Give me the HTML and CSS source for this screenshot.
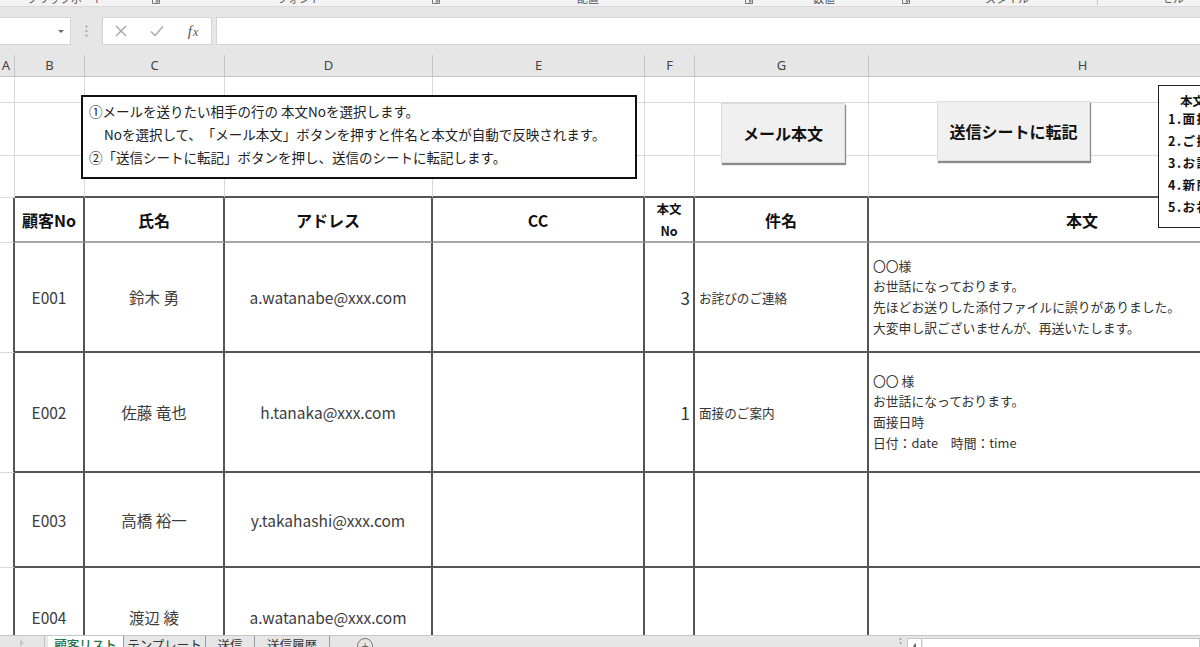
FILE: index.html
```html
<!DOCTYPE html>
<html lang="ja">
<head>
<meta charset="utf-8">
<title>顧客リスト</title>
<link rel="stylesheet" href="styles.css">
</head>
<body>
<div class="app">
  <div class="ribbon-tail">
    <span class="rl w-clip">クリップボード</span>
    <span class="rl w-l1"><svg class="launch" width="8" height="8" viewBox="0 0 8 8"><path d="M0.5 0.5h7v7h-7z M2 2l4 4 M6 3.5v2.5h-2.5" fill="none" stroke="#777" stroke-width="1"/></svg></span>
    <span class="rl w-font">フォント</span>
    <span class="rl w-l2"><svg class="launch" width="8" height="8" viewBox="0 0 8 8"><path d="M0.5 0.5h7v7h-7z M2 2l4 4 M6 3.5v2.5h-2.5" fill="none" stroke="#777" stroke-width="1"/></svg></span>
    <span class="rl w-align">配置</span>
    <span class="rl w-l3"><svg class="launch" width="8" height="8" viewBox="0 0 8 8"><path d="M0.5 0.5h7v7h-7z M2 2l4 4 M6 3.5v2.5h-2.5" fill="none" stroke="#777" stroke-width="1"/></svg></span>
    <span class="rl w-num">数値</span>
    <span class="rl w-l4"><svg class="launch" width="8" height="8" viewBox="0 0 8 8"><path d="M0.5 0.5h7v7h-7z M2 2l4 4 M6 3.5v2.5h-2.5" fill="none" stroke="#777" stroke-width="1"/></svg></span>
    <span class="rl w-style">スタイル</span>
    <span class="rl w-div"><span class="vdiv"></span></span>
    <span class="rl w-cell">セル</span>
  </div>

  <div class="fbar">
    <div class="namebox"><span class="caret"></span></div>
    <div class="fsep"><svg width="3" height="12" viewBox="0 0 3 12"><circle cx="1.5" cy="1.5" r="1" fill="#9a9a9a"/><circle cx="1.5" cy="6" r="1" fill="#9a9a9a"/><circle cx="1.5" cy="10.5" r="1" fill="#9a9a9a"/></svg></div>
    <div class="fbtns">
      <span class="fb"><svg width="12" height="12" viewBox="0 0 12 12"><path d="M1 1L11 11M11 1L1 11" stroke="#a3a3a3" stroke-width="1.3" fill="none"/></svg></span>
      <span class="fb"><svg width="14" height="12" viewBox="0 0 14 12"><path d="M1 6.5L5 10.5L13 1.5" stroke="#a8a8a8" stroke-width="1.4" fill="none"/></svg></span>
      <span class="fb fx"><i>f</i><i class="fxx">x</i></span>
    </div>
    <div class="finput"></div>
  </div>

  <div class="colhead">
    <div class="ch ch-a">A</div>
    <div class="ch">B</div>
    <div class="ch">C</div>
    <div class="ch">D</div>
    <div class="ch">E</div>
    <div class="ch">F</div>
    <div class="ch">G</div>
    <div class="ch">H</div>
  </div>

  <div class="sheet">
    <div class="grid">
      <!-- row 1 -->
      <div class="c"></div><div class="c"></div><div class="c"></div><div class="c"></div><div class="c"></div><div class="c"></div><div class="c"></div><div class="c"></div>
      <!-- row 2 -->
      <div class="c"></div><div class="c"></div><div class="c"></div><div class="c"></div><div class="c"></div><div class="c"></div><div class="c"></div><div class="c"></div>
      <!-- row 3 -->
      <div class="c"></div><div class="c top"></div><div class="c top"></div><div class="c top"></div><div class="c top"></div><div class="c top"></div><div class="c top"></div><div class="c top"></div>
      <!-- header row -->
      <div class="c lt"></div>
      <div class="c t th">顧客No</div>
      <div class="c t th">氏名</div>
      <div class="c t th">アドレス</div>
      <div class="c t th">CC</div>
      <div class="c t th th-small">本文<br>No</div>
      <div class="c t th">件名</div>
      <div class="c t th">本文</div>
      <!-- E001 -->
      <div class="c lt"></div>
      <div class="c t ctr">E001</div>
      <div class="c t ctr">鈴木 勇</div>
      <div class="c t ctr">a.watanabe@xxx.com</div>
      <div class="c t"></div>
      <div class="c t num">3</div>
      <div class="c t subj">お詫びのご連絡</div>
      <div class="c t body"><span>〇〇様</span><span>お世話になっております。</span><span>先ほどお送りした添付ファイルに誤りがありました。</span><span>大変申し訳ございませんが、再送いたします。</span></div>
      <!-- E002 -->
      <div class="c lt"></div>
      <div class="c t ctr">E002</div>
      <div class="c t ctr">佐藤 竜也</div>
      <div class="c t ctr">h.tanaka@xxx.com</div>
      <div class="c t"></div>
      <div class="c t num">1</div>
      <div class="c t subj">面接のご案内</div>
      <div class="c t body"><span>〇〇 様</span><span>お世話になっております。</span><span>面接日時</span><span>日付：date　時間：time</span></div>
      <!-- E003 -->
      <div class="c lt"></div>
      <div class="c t ctr">E003</div>
      <div class="c t ctr">高橋 裕一</div>
      <div class="c t ctr">y.takahashi@xxx.com</div>
      <div class="c t"></div>
      <div class="c t"></div>
      <div class="c t"></div>
      <div class="c t"></div>
      <!-- E004 -->
      <div class="c lt"></div>
      <div class="c t ctr">E004</div>
      <div class="c t ctr">渡辺 綾</div>
      <div class="c t ctr">a.watanabe@xxx.com</div>
      <div class="c t"></div>
      <div class="c t"></div>
      <div class="c t"></div>
      <div class="c t"></div>
    </div>

    <div class="textbox">
      <p>①メールを送りたい相手の行の 本文Noを選択します。</p>
      <p class="indent">Noを選択して、「メール本文」ボタンを押すと件名と本文が自動で反映されます。</p>
      <p>②「送信シートに転記」ボタンを押し、送信のシートに転記します。</p>
    </div>

    <div class="btn btn-mail">メール本文</div>
    <div class="btn btn-send">送信シートに転記</div>

    <div class="listbox">
      <p class="lb-title">本文No</p>
      <p>1.面接のご案内</p>
      <p>2.ご提案</p>
      <p>3.お詫びのご連絡</p>
      <p>4.新商品のご案内</p>
      <p>5.お礼</p>
    </div>
  </div>

  <div class="tabbar">
    <div class="tabnav"><span class="navarrow"></span></div>
    <div class="tab active">顧客リスト</div>
    <div class="tab t2">テンプレート</div>
    <div class="tab t3">送信</div>
    <div class="tab t4">送信履歴</div>
    <div class="addtab"><span class="plus">+</span></div>
    <div class="tabspace"></div>
    <div class="tabdots"><svg width="3" height="10" viewBox="0 0 3 10"><circle cx="1.5" cy="2" r="1" fill="#999"/><circle cx="1.5" cy="6" r="1" fill="#999"/></svg></div>
    <div class="hscroll">
      <div class="hs-left"><span class="hs-tri"></span></div>
      <div class="hs-track"></div>
    </div>
  </div>
</div>
</body>
</html>
```

FILE: styles.css
```css
* { box-sizing: border-box; margin: 0; padding: 0; }
html, body { width: 1200px; height: 647px; overflow: hidden; background: #fff; }
body { font-family: "Noto Sans CJK JP", "Noto Sans", sans-serif; color: #222; text-spacing-trim: space-all; }

.app { display: flex; flex-direction: column; width: 1200px; height: 647px; overflow: hidden; }

/* ribbon tail */
.ribbon-tail { flex: none; height: 7px; background: #f3f3f3; border-bottom: 1px solid #d9d9d9; display: flex; padding-left: 27px; overflow: hidden; }
.rl { flex: none; font-size: 11px; line-height: 11px; margin-top: -7px; color: #555; white-space: nowrap; }
.launch { display: block; margin-top: 3px; }
.w-clip { width: 125px; }
.w-l1 { width: 125px; }
.w-font { width: 155px; }
.w-l2 { width: 145px; }
.w-align { width: 168px; }
.w-l3 { width: 68px; }
.w-num { width: 89px; }
.w-l4 { width: 83px; }
.w-style { width: 112px; }
.w-div { width: 65px; }
.vdiv { display: block; width: 1px; height: 12px; background: #c8c8c8; }

/* formula bar */
.fbar { flex: none; height: 45px; background: #e6e6e6; display: flex; align-items: flex-start; padding-top: 10px; }
.namebox { width: 71px; height: 28px; background: #fff; border: 1px solid #d4d4d4; border-left: 0; display: flex; align-items: center; justify-content: flex-end; padding-right: 6px; }
.caret { width: 0; height: 0; border-left: 3px solid transparent; border-right: 3px solid transparent; border-top: 3px solid #666; }
.fsep { width: 31px; height: 28px; display: flex; align-items: center; justify-content: center; }
.fbtns { width: 110px; height: 28px; background: #fff; border: 1px solid #d4d4d4; display: grid; grid-template-columns: 36px 36px 36px; align-items: center; }
.fb { display: flex; justify-content: center; align-items: center; }
.fx { font-family: "Liberation Serif", "DejaVu Serif", serif; color: #555; font-size: 15px; line-height: 1; }
.fx i { font-style: italic; }
.fxx { font-size: 12px; margin-left: 1px; position: relative; top: 1px; }
.finput { flex: 1; height: 28px; margin-left: 4px; background: #fff; border: 1px solid #d4d4d4; border-right: 0; }

/* column header */
.colhead { flex: none; height: 25px; background: #e6e6e6; border-bottom: 1px solid #c6c6c6; display: grid; grid-template-columns: 15px 70px 140px 208px 212px 50px 174px 428px; padding-top: 3px; }
.ch { border-right: 1px solid #c4c4c4; font-family: "Noto Sans", "DejaVu Sans", sans-serif; font-size: 13px; color: #444; text-align: center; line-height: 21px; }
.ch-a { text-align: right; padding-right: 4px; overflow: hidden; }

/* sheet */
.sheet { flex: 1; position: relative; overflow: hidden; }
.grid { display: grid; width: 1297px; grid-template-columns: 15px 70px 140px 208px 212px 50px 174px 428px; grid-template-rows: 26px 53px 42px 45px 110px 120px 95px 100px; }
.c { border-right: 1px solid #dadada; border-bottom: 1px solid #dadada; overflow: hidden; }
.c.top { border-bottom: 2px solid #555; }
.c.lt { border-right: 2px solid #555; }
.c.t { border-right: 2px solid #555; border-bottom: 2px solid #555; }
.c.th { border-bottom: 2px solid #a8a8a8; display: flex; align-items: center; justify-content: center; text-align: center; font-weight: bold; font-size: 16px; color: #111; }
.c.th-small { font-size: 12.5px; line-height: 22px; }
.ctr { display: flex; align-items: center; justify-content: center; font-size: 15.5px; color: #3c3c3c; white-space: nowrap; }
.num { display: flex; align-items: center; justify-content: flex-end; padding-right: 3px; font-size: 17px; color: #333; }
.subj { display: flex; align-items: center; padding-left: 4px; font-size: 12.6px; color: #333; white-space: nowrap; }
.body { display: flex; flex-direction: column; justify-content: center; padding-left: 4px; font-size: 12.8px; line-height: 20.7px; color: #333; white-space: nowrap; }

/* overlays on the sheet */
.textbox { position: absolute; left: 81px; top: 18px; width: 556px; height: 84px; background: #fff; border: 2px solid #111; padding: 3px 6px; font-size: 13.5px; line-height: 23px; color: #222; white-space: nowrap; }
.textbox .indent { padding-left: 15px; }

.btn { position: absolute; height: 60px; display: flex; align-items: center; justify-content: center; background: #f0f0f0; border: 1px solid #dcdcdc; box-shadow: 1px 2px 1px #8c8c8c; font-size: 16px; font-weight: bold; color: #111; }
.btn-mail { left: 721px; top: 26px; width: 124px; }
.btn-send { left: 937px; top: 24px; width: 153px; }

.listbox { position: absolute; left: 1158px; top: 8px; width: 90px; height: 143px; background: #fff; border: 1px solid #222; padding: 5px 0 0 9px; font-size: 12.5px; font-weight: bold; line-height: 22px; color: #111; white-space: nowrap; letter-spacing: 1.5px; }
.listbox .lb-title { padding-left: 12px; line-height: 20px; margin-bottom: -3px; letter-spacing: 0; }

/* sheet tabs */
.tabbar { flex: none; height: 12px; background: #e6e6e6; border-top: 1px solid #c6c6c6; display: flex; align-items: flex-start; overflow: hidden; }
.tabnav { width: 45px; height: 11px; border-right: 1px solid #c0c0c0; display: flex; justify-content: center; padding-top: 3px; }
.navarrow { width: 0; height: 0; border-top: 4px solid transparent; border-bottom: 4px solid transparent; border-left: 4px solid #c8c8c8; }
.tab { height: 11px; font-size: 12.5px; line-height: 16px; padding-top: 1px; color: #333; white-space: nowrap; text-align: center; overflow: hidden; }
.tab.active { margin-left: 3px; width: 75px; background: #fff; color: #217346; font-weight: 500; }
.t2 { width: 83px; border-left: 1px solid #9a9a9a; border-right: 1px solid #9a9a9a; }
.t3 { width: 49px; border-right: 1px solid #9a9a9a; }
.t4 { width: 75px; border-right: 1px solid #9a9a9a; }
.addtab { width: 70px; display: flex; justify-content: center; padding-top: 2px; }
.plus { display: block; width: 16px; height: 16px; border: 1px solid #777; border-radius: 50%; font-size: 13px; line-height: 13px; text-align: center; color: #666; }
.tabspace { flex: 1; }
.tabdots { width: 14px; padding-top: 1px; display: flex; justify-content: center; }
.hscroll { width: 293px; display: flex; height: 11px; margin-top: 2px; }
.hs-left { width: 15px; height: 12px; background: #fff; border: 1px solid #c6c6c6; display: flex; justify-content: center; padding-top: 4px; }
.hs-tri { width: 0; height: 0; border-top: 3px solid transparent; border-bottom: 3px solid transparent; border-right: 3px solid #666; }
.hs-track { flex: 1; height: 12px; background: #fff; border: 1px solid #c6c6c6; border-left: 0; margin-left: 1px; }
```
